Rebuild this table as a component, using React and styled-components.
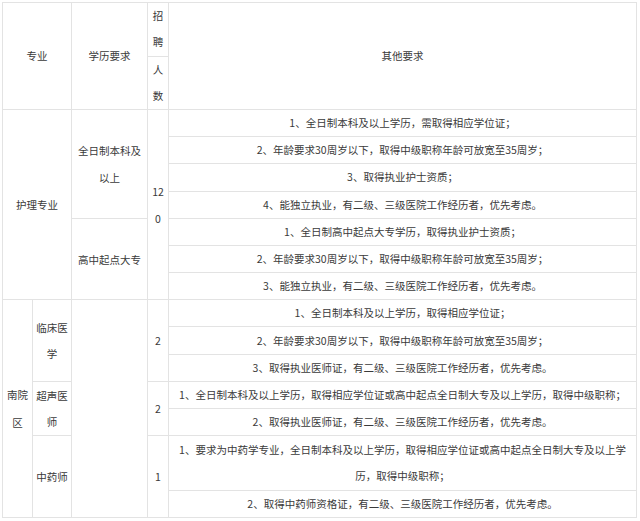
import React from 'react';
import styled, { createGlobalStyle } from 'styled-components';

const GlobalStyle = createGlobalStyle`
  html, body {
    margin: 0;
    padding: 0;
    background: #fff;
  }
  body {
    font-family: "Noto Sans CJK SC", "Noto Sans", sans-serif;
    color: #333;
  }
`;

const Wrap = styled.div`
  padding: 2px 0 0 2px;
`;

const Table = styled.table`
  border-collapse: collapse;
  table-layout: fixed;
  width: 634px;
  font-size: 10.5px;
  color: #3a3a3a;
`;

const Row = styled.tr`
  height: ${(p) => p.$h || 27.2}px;
`;

const Cell = styled.td`
  border: 1px solid #e3e3e3;
  padding: 0 2px;
  text-align: center;
  vertical-align: middle;
  white-space: nowrap;
  line-height: ${(p) => p.$lh || 16}px;
  overflow: hidden;
`;

const nursing = [
  {
    edu: ['全日制本科及', '以上'],
    items: [
      '1、全日制本科及以上学历，需取得相应学位证；',
      '2、年龄要求30周岁以下，取得中级职称年龄可放宽至35周岁；',
      '3、取得执业护士资质；',
      '4、能独立执业，有二级、三级医院工作经历者，优先考虑。',
    ],
  },
  {
    edu: ['高中起点大专'],
    items: [
      '1、全日制高中起点大专学历，取得执业护士资质；',
      '2、年龄要求30周岁以下，取得中级职称年龄可放宽至35周岁；',
      '3、能独立执业，有二级、三级医院工作经历者，优先考虑。',
    ],
  },
];

const south = [
  {
    name: ['临床医', '学'],
    count: '2',
    items: [
      ['1、全日制本科及以上学历，取得相应学位证；'],
      ['2、年龄要求30周岁以下，取得中级职称年龄可放宽至35周岁；'],
      ['3、取得执业医师证，有二级、三级医院工作经历者，优先考虑。'],
    ],
  },
  {
    name: ['超声医', '师'],
    count: '2',
    items: [
      ['1、全日制本科及以上学历，取得相应学位证或高中起点全日制大专及以上学历，取得中级职称；'],
      ['2、取得执业医师证，有二级、三级医院工作经历者，优先考虑。'],
    ],
  },
  {
    name: ['中药师'],
    count: '1',
    items: [
      ['1、要求为中药学专业，全日制本科及以上学历，取得相应学位证或高中起点全日制大专及以上学', '历，取得中级职称；'],
      ['2、取得中药师资格证，有二级、三级医院工作经历者，优先考虑。'],
    ],
  },
];

const Lines = ({ lines }) =>
  lines.map((l, i) => (
    <React.Fragment key={i}>
      {i > 0 && <br />}
      {l}
    </React.Fragment>
  ));

const nursingRows = () => {
  const rows = [];
  nursing.forEach((g, gi) => {
    g.items.forEach((item, ii) => {
      rows.push(
        <Row key={`n${gi}-${ii}`}>
          {gi === 0 && ii === 0 && (
            <Cell colSpan={2} rowSpan={7}>护理专业</Cell>
          )}
          {ii === 0 && (
            <Cell rowSpan={g.items.length} $lh={27}>
              <Lines lines={g.edu} />
            </Cell>
          )}
          {gi === 0 && ii === 0 && (
            <Cell rowSpan={7} $lh={27}>
              <Lines lines={['12', '0']} />
            </Cell>
          )}
          <Cell>{item}</Cell>
        </Row>
      );
    });
  });
  return rows;
};

const southRows = () => {
  const rows = [];
  south.forEach((g, gi) => {
    g.items.forEach((item, ii) => {
      rows.push(
        <Row key={`s${gi}-${ii}`} $h={item.length > 1 ? 54.4 : 27.2}>
          {gi === 0 && ii === 0 && (
            <Cell rowSpan={7} $lh={28}>
              <Lines lines={['南院', '区']} />
            </Cell>
          )}
          {ii === 0 && (
            <Cell rowSpan={g.items.length} $lh={26}>
              <Lines lines={g.name} />
            </Cell>
          )}
          {gi === 0 && ii === 0 && <Cell rowSpan={7} />}
          {ii === 0 && <Cell rowSpan={g.items.length}>{g.count}</Cell>}
          <Cell $lh={item.length > 1 ? 26.4 : 16}>
            <Lines lines={item} />
          </Cell>
        </Row>
      );
    });
  });
  return rows;
};

export default function App() {
  return (
    <Wrap>
      <GlobalStyle />
      <Table>
        <colgroup>
          <col style={{ width: 30 }} />
          <col style={{ width: 39 }} />
          <col style={{ width: 76 }} />
          <col style={{ width: 21 }} />
          <col style={{ width: 468 }} />
        </colgroup>
        <tbody>
          <Row $h={53.6}>
            <Cell colSpan={2} rowSpan={2}>专业</Cell>
            <Cell rowSpan={2}>学历要求</Cell>
            <Cell $lh={26}>
              <Lines lines={['招', '聘']} />
            </Cell>
            <Cell rowSpan={2}>其他要求</Cell>
          </Row>
          <Row $h={53.4}>
            <Cell $lh={26}>
              <Lines lines={['人', '数']} />
            </Cell>
          </Row>
          {nursingRows()}
          {southRows()}
        </tbody>
      </Table>
    </Wrap>
  );
}
